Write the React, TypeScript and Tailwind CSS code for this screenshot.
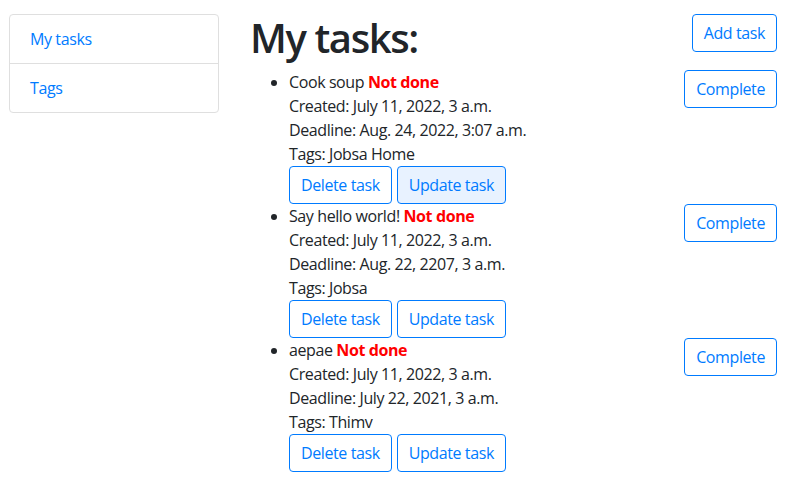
import React from "react";

type Task = {
  title: string;
  created: string;
  deadline: string;
  tags: string;
  focused?: boolean;
};

const tasks: Task[] = [
  {
    title: "Cook soup",
    created: "July 11, 2022, 3 a.m.",
    deadline: "Aug. 24, 2022, 3:07 a.m.",
    tags: "Jobsa Home",
    focused: true,
  },
  {
    title: "Say hello world!",
    created: "July 11, 2022, 3 a.m.",
    deadline: "Aug. 22, 2207, 3 a.m.",
    tags: "Jobsa",
  },
  {
    title: "aepae",
    created: "July 11, 2022, 3 a.m.",
    deadline: "July 22, 2021, 3 a.m.",
    tags: "Thimv",
  },
];

const btn =
  "h-[38px] px-[11px] rounded-[4px] border border-[#007bff] text-[#007bff] leading-6 text-base";

const App = () => {
  return (
    <div
      className="min-h-screen flex bg-white text-[#212529] text-base leading-6 tracking-[-0.4px]"
      style={{ fontFamily: '"Segoe UI", "Open Sans", sans-serif' }}
    >
      {/* Sidebar */}
      <div className="w-[249px] shrink-0 pl-[9px] pt-[14px]">
        <div className="w-[210px] border border-[#dfdfdf] rounded-[4px]">
          <div className="h-[49px] px-5 flex items-center text-[#007bff] border-b border-[#dfdfdf]">
            My tasks
          </div>
          <div className="h-[48px] px-5 flex items-center text-[#007bff]">Tags</div>
        </div>
      </div>

      {/* Main */}
      <div className="flex-1 pr-[15px] pt-[14px]">
        <div className="flex justify-between items-start mb-2">
          <h1 className="text-[40px] leading-[48px] font-semibold tracking-[-1.4px] pl-px">
            My tasks:
          </h1>
          <button className={btn}>Add task</button>
        </div>

        <ul className="list-disc pl-10">
          {tasks.map((t) => (
            <li key={t.title}>
              <div className="flex justify-between items-start">
                <div>
                  <div>
                    {t.title} <span className="font-bold text-[#ff0000]">Not done</span>
                  </div>
                  <div>Created: {t.created}</div>
                  <div>Deadline: {t.deadline}</div>
                  <div>Tags: {t.tags}</div>
                  <div className="flex gap-[5px]">
                    <button className={btn}>Delete task</button>
                    <button className={`${btn} ${t.focused ? "bg-[#e8f2ff]" : ""}`}>
                      Update task
                    </button>
                  </div>
                </div>
                <button className={btn}>Complete</button>
              </div>
            </li>
          ))}
        </ul>
      </div>
    </div>
  );
};

export default App;
